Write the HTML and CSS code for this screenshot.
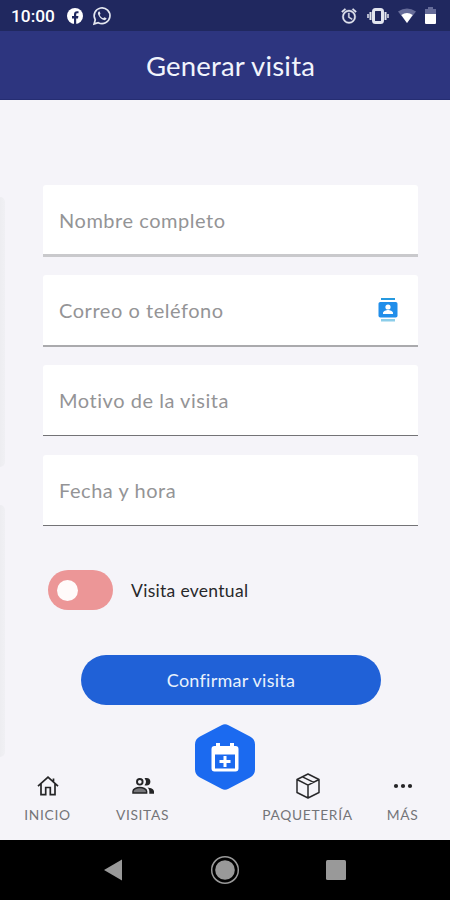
FILE: index.html
```html
<!DOCTYPE html>
<html lang="es">
<head>
<meta charset="utf-8">
<title>Generar visita</title>
<link rel="stylesheet" href="styles.css">
</head>
<body>
<div class="status">
  <span class="clock">10:00</span>
  <svg class="fb" width="16" height="16" viewBox="0 0 16 16"><circle cx="8" cy="8" r="8" fill="#fff"/><path d="M7 16v-5.500H5V8h2V6.300C7 4.200 8.200 3.200 10 3.200l1.500.1v2h-1c-1 0-1.300.5-1.300 1.200V8h2.200l-.4 2.500H9.200V16z" fill="#20285f"/></svg>
  <svg class="wa" width="20" height="20" viewBox="0 0 24 24"><path d="M2.500 21.500l1.400-5A9.500 9.500 0 1 1 7.500 20z" fill="none" stroke="#e4e7f0" stroke-width="2"/><path d="M8.300 6.700c-1.100.8-1.500 2-.9 3.500 1.100 3.100 3.700 5.700 6.800 6.700 1.600.4 3-.5 3.300-2.100l-2.700-1.400-1.300 1.400c-2-.8-3.500-2.300-4.300-4.100l1-1.300-1-2.700z" fill="#e4e7f0"/></svg>
  <div class="indicators">
    <svg width="18" height="18" viewBox="0 0 24 24" fill="#e2e5ef"><path d="M22 5.720l-4.600-3.860-1.290 1.530 4.600 3.860L22 5.720zM7.880 3.390L6.600 1.860 2 5.710l1.290 1.530 4.590-3.850zM12.500 8H11v6l4.750 2.850.75-1.230-4-2.370V8zM12 4a9 9 0 1 0 0 18 9 9 0 0 0 0-18zm0 16a7 7 0 1 1 0-14 7 7 0 0 1 0 14z" stroke="#e2e5ef" stroke-width=".5"/></svg>
    <svg class="vibrate" width="22" height="18" viewBox="0 0 22 18"><rect x="6.500" y="2.500" width="9" height="13" rx="2" fill="none" stroke="#e2e5ef" stroke-width="3"/><path d="M3.500 5v8M18.500 5v8" stroke="#e2e5ef" stroke-width="2"/><path d="M1 7v4M21 7v4" stroke="#e2e5ef" stroke-width="1.500"/></svg>
    <svg class="wifi" width="18" height="16" viewBox="0 0 18 16"><path d="M0 3.500Q9-2.500 18 3.500L9 15z" fill="#666c99"/><path d="M3.300 7Q9 2.800 14.700 7L9 15z" fill="#fff"/></svg>
    <svg class="battery" width="11" height="17" viewBox="0 0 11 17"><path d="M3 0h5v2h3v6H0V2h3z" fill="#666c99"/><path d="M0 7h11v9a1 1 0 0 1-1 1H1a1 1 0 0 1-1-1z" fill="#fff"/></svg>
  </div>
</div>
<header class="header"><h1>Generar visita</h1></header>
<main class="main">
  <div class="edge edge-top"></div>
  <div class="edge edge-bottom"></div>
  <form class="form">
    <div class="field field-thick"><span>Nombre completo</span></div>
    <div class="field field-mid"><span>Correo o teléfono</span>
      <svg width="20" height="24" viewBox="0 0 20 24"><path d="M3 0h14v2H3z" fill="#2699df"/><rect x=".5" y="4" width="19" height="15.500" rx="1.800" fill="#218eea"/><circle cx="10" cy="9" r="2.600" fill="#fff"/><path d="M5 16v-1c0-2 3.300-3 5-3s5 1 5 3v1z" fill="#fff"/><path d="M3 21h14v2.500H3z" fill="#8bcde9"/></svg>
    </div>
    <div class="field"><span>Motivo de la visita</span></div>
    <div class="field"><span>Fecha y hora</span></div>
  </form>
  <div class="toggle-row"><div class="toggle"><i></i></div><span>Visita eventual</span></div>
  <div class="confirm"><span>Confirmar visita</span></div>
</main>
<nav class="tabs">
  <div class="tab">
    <svg width="24" height="24" viewBox="0 0 24 24" fill="none" stroke="#252527" stroke-width="1.700"><path d="M2 12.200L12 3.200l10 9M5 10v10.700h4.700v-7.200h4.600v7.200H19V10M17.500 8V4.500"/></svg>
    <span>INICIO</span>
  </div>
  <div class="tab">
    <svg width="24" height="24" viewBox="0 0 24 24"><circle cx="8.800" cy="7.800" r="2.800" fill="none" stroke="#242426" stroke-width="1.900"/><path d="M13.500 4.300c4-1 5.900 1 5.900 3.500s-2 4.500-5.900 3.500c2-2 2-5 0-7z" fill="#242426"/><path d="M2 19v-1.700c0-2.500 4-3.800 6.800-3.800s6.800 1.300 6.800 3.800V19z" fill="#77777b" stroke="#242426" stroke-width="1.500"/><path d="M16.500 13.500c3.500.5 6.500 1.600 6.500 4.100v2.100h-4.700v-2.500c0-1.500-.7-2.700-1.800-3.700z" fill="#242426"/></svg>
    <span>VISITAS</span>
  </div>
  <div class="add">
    <svg width="62" height="68" viewBox="0 0 62 68"><path d="M27.500 2.200Q31 .2 34.500 2.200L56 13.500q5 2.700 5 8v25q0 5.300-5 8L34.500 65.800q-3.500 2-7 0L6 54.500q-5-2.700-5-8v-25q0-5.300 5-8z" fill="#1b6af0"/><path d="M22 20h4v3h10v-3h4v3h1.500a3 3 0 0 1 3 3v19.500a3 3 0 0 1-3 3h-21a3 3 0 0 1-3-3V26a3 3 0 0 1 3-3H22z" fill="#fff"/><path d="M21 31.500h20v14H21z" fill="#1b6af0"/><path d="M31 33v11M25.500 38.500h11" stroke="#fff" stroke-width="3"/></svg>
  </div>
  <div class="tab">
    <svg width="26" height="26" viewBox="0 0 26 26" fill="none" stroke="#29292b" stroke-width="1.500" stroke-linejoin="round"><path d="M13 1l11 5.500v13L13 25 2 19.500v-13zM2 6.500l11 5.700 11-5.700M13 12.200V25M7.500 3.800l11.200 5.500"/></svg>
    <span>PAQUETERÍA</span>
  </div>
  <div class="tab">
    <svg width="24" height="24" viewBox="0 0 24 24" fill="#242426"><circle cx="5" cy="12" r="2.100"/><circle cx="12" cy="12" r="2.100"/><circle cx="19" cy="12" r="2.100"/></svg>
    <span>MÁS</span>
  </div>
</nav>
<footer class="system">
  <svg width="30" height="30" viewBox="0 0 30 30"><path d="M5 15L23 4.500v21z" fill="#999"/></svg>
  <svg width="30" height="30" viewBox="0 0 30 30"><circle cx="15" cy="15" r="13.300" fill="none" stroke="#999" stroke-width="1.500"/><circle cx="15" cy="15" r="9.800" fill="#999"/></svg>
  <svg width="30" height="30" viewBox="0 0 30 30"><rect x="5" y="5" width="20" height="20" rx="1.500" fill="#999"/></svg>
</footer>
</body>
</html>
```
FILE: styles.css
```css
* { box-sizing: border-box; }
body {
  margin: 0;
  width: 450px;
  height: 900px;
  display: flex;
  flex-direction: column;
  overflow: hidden;
  background: #f5f4f9;
  font-family: Lato, sans-serif;
}
svg { display: block; flex: none; }
.status {
  height: 31px;
  flex: none;
  display: flex;
  align-items: center;
  padding: 0 14px 0 11px;
  background: #20285f;
}
.clock {
  width: 56px;
  font: 500 17.3px/30px Roboto, sans-serif;
  color: #fff;
}
.wa { margin-left: 9px; }
.indicators { display: flex; align-items: center; margin-left: auto; }
.vibrate { margin-left: 9px; }
.wifi { margin-left: 9px; }
.battery { margin-left: 9px; }
.header {
  height: 69px;
  flex: none;
  display: flex;
  justify-content: center;
  background: #2d357f;
  border-bottom: 1px solid #252d72;
}
.header h1 {
  margin: 0 0 0 11px;
  font-size: 27.5px;
  letter-spacing: .2px;
  line-height: 69px;
  font-weight: 400;
  color: #f1f4fc;
  white-space: nowrap;
}
.main { position: relative; flex: 1; padding: 85px 32px 0 43px; }
.edge {
  position: absolute;
  left: 0;
  width: 5px;
  background: linear-gradient(90deg, #ededf1, #f0f0f4);
  border-radius: 0 5px 5px 0;
}
.edge-top { top: 97px; height: 270px; }
.edge-bottom { top: 405px; height: 252px; }
.form { display: grid; grid-auto-rows: 90px; align-items: start; }
.field {
  height: 71px;
  display: flex;
  align-items: center;
  justify-content: space-between;
  padding: 0 20px 0 16px;
  background: #fff;
  border-bottom: 1px solid #737376;
  border-radius: 3px 3px 0 0;
  font-size: 20px;
  letter-spacing: .54px;
  color: #949496;
}
.field-thick { height: 72px; border-bottom: 3px solid #c9c9cc; }
.field-mid { height: 72px; border-bottom: 2px solid #aaaaad; }
.toggle-row {
  display: flex;
  align-items: center;
  height: 40px;
  margin: 25px 0 0 5px;
  font-size: 17.5px;
  letter-spacing: .3px;
  color: #28282b;
}
.toggle {
  width: 65px;
  height: 40px;
  padding: 10px 9px;
  margin-right: 18px;
  border-radius: 20px;
  background: #ec9697;
}
.toggle i { display: block; width: 21px; height: 21px; border-radius: 50%; background: #fffafa; }
.confirm {
  width: 300px;
  height: 50px;
  margin: 45px 0 0 38px;
  border-radius: 25px;
  background: #2061d7;
  color: #e9f2fc;
  font-size: 18px;
  letter-spacing: .25px;
  line-height: 50px;
  text-align: center;
}
.tabs {
  height: 117px;
  flex: none;
  display: grid;
  grid-template-columns: 95px 95px 70px 95px 95px;
  align-items: start;
}
.tab {
  display: grid;
  grid-template-rows: 26px 20px;
  align-items: center;
  justify-items: center;
  row-gap: 6px;
  padding-top: 50px;
  font-size: 13.8px;
  letter-spacing: .65px;
  line-height: 20px;
  color: #747478;
}
.add { justify-self: center; }
.system {
  height: 60px;
  flex: none;
  display: flex;
  align-items: center;
  justify-content: center;
  gap: 81px;
  background: #000;
}
```
